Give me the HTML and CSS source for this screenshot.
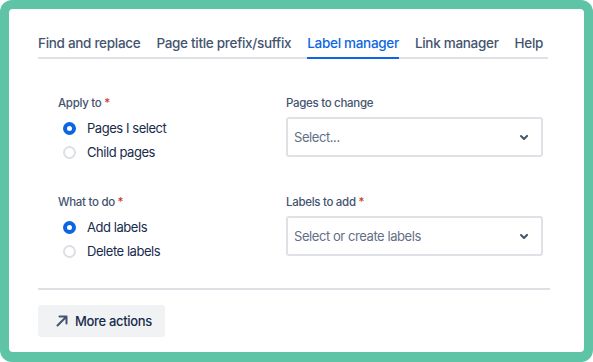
FILE: index.html
```html
<!DOCTYPE html>
<html lang="en">
<head>
<meta charset="utf-8">
<title>Label manager</title>
<link rel="stylesheet" href="styles.css">
</head>
<body>
<div class="frame">
  <div class="card">
    <nav class="tabs">
      <span class="tab">Find and replace</span>
      <span class="tab">Page title prefix/suffix</span>
      <span class="tab active">Label manager</span>
      <span class="tab">Link manager</span>
      <span class="tab">Help</span>
    </nav>
    <div class="form">
      <div class="field">
        <div class="label">Apply to <span class="req">*</span></div>
        <div class="radios">
          <div class="radio-row"><span class="radio checked"></span>Pages I select</div>
          <div class="radio-row"><span class="radio"></span>Child pages</div>
        </div>
      </div>
      <div class="field">
        <div class="label">Pages to change</div>
        <div class="select">
          <span class="placeholder">Select...</span>
          <svg class="chev" width="24" height="24" viewBox="0 0 24 24"><path d="M8.3 10.3a1 1 0 0 1 1.4 0L12 12.6l2.3-2.3a1 1 0 1 1 1.4 1.4l-3 3a1 1 0 0 1-1.4 0l-3-3a1 1 0 0 1 0-1.4z" fill="#44546f"/></svg>
        </div>
      </div>
      <div class="field">
        <div class="label">What to do <span class="req">*</span></div>
        <div class="radios">
          <div class="radio-row"><span class="radio checked"></span>Add labels</div>
          <div class="radio-row"><span class="radio"></span>Delete labels</div>
        </div>
      </div>
      <div class="field">
        <div class="label">Labels to add <span class="req">*</span></div>
        <div class="select">
          <span class="placeholder">Select or create labels</span>
          <svg class="chev" width="24" height="24" viewBox="0 0 24 24"><path d="M8.3 10.3a1 1 0 0 1 1.4 0L12 12.6l2.3-2.3a1 1 0 1 1 1.4 1.4l-3 3a1 1 0 0 1-1.4 0l-3-3a1 1 0 0 1 0-1.4z" fill="#44546f"/></svg>
        </div>
      </div>
    </div>
    <div class="divider"></div>
    <div class="footer">
      <button class="btn">
        <svg width="16" height="16" viewBox="0 0 16 16"><path d="M3.5 12.5L12 4M5.5 3.5h7v7" fill="none" stroke="#44546f" stroke-width="2" stroke-linecap="round" stroke-linejoin="round"/></svg>
        <span>More actions</span>
      </button>
    </div>
  </div>
</div>
</body>
</html>
```
FILE: styles.css
```css
* { box-sizing: border-box; }
html, body { margin: 0; padding: 0; background: #ffffff; }
body { font-family: Inter, "Noto Sans", sans-serif; color: #172b4d; }

.frame {
  width: 593px;
  height: 362px;
  background: #5ec4a5;
  border-radius: 12px;
  padding: 9px 9px 10px 9px;
}
.card {
  background: #ffffff;
  border-radius: 4px;
  height: 343px;
  padding: 24px 36px 0 29px;
}

.tabs {
  display: flex;
  gap: 16px;
  border-bottom: 2px solid #dfe1e6;
  width: 510px;
}
.tab {
  font-size: 13.5px;
  letter-spacing: -0.3px;
  font-weight: 500;
  line-height: 20px;
  color: #44546f;
  padding-bottom: 4px;
  border-bottom: 2px solid transparent;
  margin-bottom: -2px;
  white-space: nowrap;
}
.tab.active {
  color: #0c66e4;
  border-bottom-color: #0c66e4;
}

.form {
  display: grid;
  grid-template-columns: 228px 257px;
  row-gap: 29px;
  padding: 35px 0 0 20px;
  align-items: start;
}
.label {
  font-size: 11.5px;
  letter-spacing: -0.3px;
  line-height: 18px;
  font-weight: 500;
  color: #44546f;
}
.req { color: #c9372c; }

.radios { margin-top: 4px; display: flex; flex-direction: column; }
.radio-row {
  display: flex;
  align-items: center;
  height: 24px;
  font-size: 13px;
  letter-spacing: -0.45px;
  color: #172b4d;
  padding-left: 5px;
}
.radio {
  width: 13px;
  height: 13px;
  border-radius: 50%;
  border: 2px solid #dcdfe4;
  background: #ffffff;
  margin-right: 11px;
  flex: none;
}
.radio.checked {
  border: 4px solid #0c66e4;
  background: #ffffff;
}

.select {
  margin-top: 5px;
  height: 40px;
  border: 2px solid #dfe1e6;
  border-radius: 3px;
  display: flex;
  align-items: center;
  justify-content: space-between;
  padding: 0 5px 0 6px;
}
.placeholder { font-size: 13px; letter-spacing: -0.43px; color: #626f86; }
.chev { flex: none; }

.divider {
  margin-top: 25px;
  height: 2px;
  background: #dcdfe4;
  width: 512px;
}
.footer { padding-top: 15px; }
.btn {
  display: flex;
  align-items: center;
  gap: 5px;
  height: 32px;
  padding: 0 13px 0 16px;
  border: none;
  border-radius: 3px;
  background: #f1f2f4;
  font-family: inherit;
  font-size: 13px;
  letter-spacing: -0.33px;
  font-weight: 500;
  color: #172b4d;
}
```
